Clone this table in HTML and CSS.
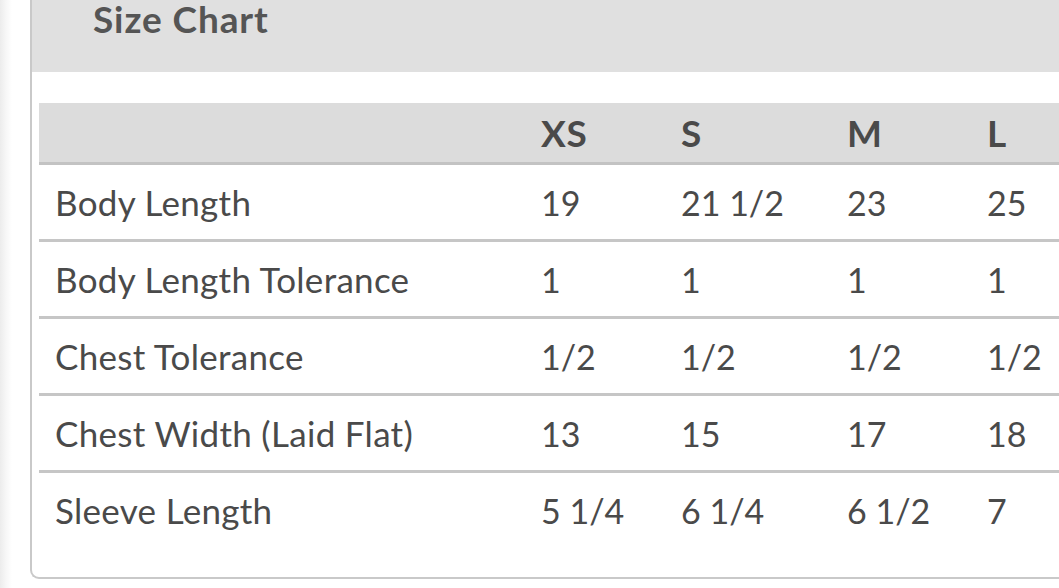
FILE: index.html
```html
<!DOCTYPE html>
<html lang="en">
<head>
<meta charset="utf-8">
<title>Size Chart</title>
<link rel="stylesheet" href="styles.css">
</head>
<body>
<div class="page">
  <section class="panel">
    <div class="panel-head"><h2 class="panel-title">Size Chart</h2></div>
    <div class="panel-body">
      <table class="chart">
        <colgroup>
          <col class="c-label"><col class="c-xs"><col class="c-s"><col class="c-m"><col class="c-l">
        </colgroup>
        <thead>
          <tr><th></th><th>XS</th><th>S</th><th>M</th><th>L</th></tr>
        </thead>
        <tbody>
          <tr><td class="label">Body Length</td><td>19</td><td>21 1/2</td><td>23</td><td>25</td></tr>
          <tr><td class="label">Body Length Tolerance</td><td>1</td><td>1</td><td>1</td><td>1</td></tr>
          <tr><td class="label">Chest Tolerance</td><td>1/2</td><td>1/2</td><td>1/2</td><td>1/2</td></tr>
          <tr><td class="label">Chest Width (Laid Flat)</td><td>13</td><td>15</td><td>17</td><td>18</td></tr>
          <tr><td class="label">Sleeve Length</td><td>5 1/4</td><td>6 1/4</td><td>6 1/2</td><td>7</td></tr>
        </tbody>
      </table>
    </div>
  </section>
</div>
</body>
</html>
```

FILE: styles.css
```css
html, body {
  margin: 0;
  padding: 0;
}
body {
  width: 1059px;
  height: 588px;
  overflow: hidden;
  background: linear-gradient(to right, #ececec 0, #f7f7f7 6px, #ffffff 12px);
  font-family: Lato, "Open Sans", sans-serif;
  color: #4a4a4a;
}
.page {
  padding-left: 30px;
}
.panel {
  width: 1029px;
}
.panel-head {
  background: #e0e0e0;
  border-left: 2px solid #c9c9c9;
  height: 72px;
  box-sizing: border-box;
  padding: 0 0 0 61px;
}
.panel-title {
  margin: 0;
  font-size: 37px;
  line-height: 37px;
  letter-spacing: 0.9px;
  font-weight: 700;
  color: #555555;
}
.panel-body {
  background: #ffffff;
  border: 2px solid #c9c9c9;
  border-top: 0;
  border-right: 0;
  border-radius: 0 0 0 9px;
  padding: 31px 0 30px 7px;
}
.chart {
  border-collapse: separate;
  border-spacing: 0;
  table-layout: fixed;
  width: 1020px;
  font-size: 34px;
}
.c-label { width: 486px; }
.c-xs { width: 140px; }
.c-s { width: 166px; }
.c-m { width: 140px; }
.c-l { width: 88px; }
.chart th,
.chart td {
  text-align: left;
  padding: 0 0 0 16px;
  white-space: nowrap;
  vertical-align: middle;
}
.chart th {
  background: #dcdcdc;
  height: 59px;
  border-bottom: 3px solid #c3c3c3;
  font-weight: 700;
  font-size: 37px;
  letter-spacing: 0.6px;
}
.chart td {
  height: 74px;
  border-bottom: 3px solid #c6c6c6;
}
.chart td.label {
  font-size: 35px;
  letter-spacing: 0.3px;
}
.chart tbody tr:last-child td {
  border-bottom: 0;
}
```
